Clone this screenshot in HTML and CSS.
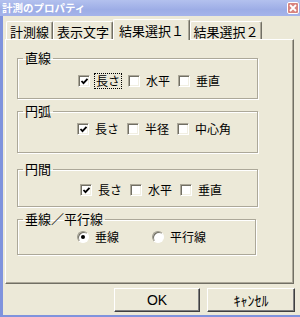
FILE: index.html
```html
<!DOCTYPE html>
<html lang="ja">
<head>
<meta charset="utf-8">
<title>計測のプロパティ</title>
<link rel="stylesheet" href="styles.css">
</head>
<body>
<div class="window">
  <div class="titlebar">
    <span class="title">計測のプロパティ</span>
    <span class="close"><svg width="10" height="10" viewBox="0 0 10 10"><path d="M2 2 L8 8 M8 2 L2 8" stroke="#fff" stroke-width="1.8" fill="none"/></svg></span>
  </div>
  <div class="client">
    <div class="tabs">
      <div class="tab t1">計測線</div>
      <div class="tab t2">表示文字</div>
      <div class="tab t3 active">結果選択１</div>
      <div class="tab t4">結果選択２</div>
    </div>
    <div class="panel">
      <fieldset class="group g1">
        <legend>直線</legend>
        <div class="row">
          <span class="item"><span class="cb checked"><svg width="9" height="9" viewBox="0 0 9 9"><path d="M1.5 4 L3.5 6.2 L7.5 1.8" stroke="#000" stroke-width="1.8" fill="none"/></svg></span><span class="lbl focus">長さ</span></span>
          <span class="item"><span class="cb"></span><span class="lbl">水平</span></span>
          <span class="item"><span class="cb"></span><span class="lbl">垂直</span></span>
        </div>
      </fieldset>
      <fieldset class="group g2">
        <legend>円弧</legend>
        <div class="row">
          <span class="item"><span class="cb checked"><svg width="9" height="9" viewBox="0 0 9 9"><path d="M1.5 4 L3.5 6.2 L7.5 1.8" stroke="#000" stroke-width="1.8" fill="none"/></svg></span><span class="lbl">長さ</span></span>
          <span class="item"><span class="cb"></span><span class="lbl">半径</span></span>
          <span class="item"><span class="cb"></span><span class="lbl">中心角</span></span>
        </div>
      </fieldset>
      <fieldset class="group g3">
        <legend>円間</legend>
        <div class="row">
          <span class="item"><span class="cb checked"><svg width="9" height="9" viewBox="0 0 9 9"><path d="M1.5 4 L3.5 6.2 L7.5 1.8" stroke="#000" stroke-width="1.8" fill="none"/></svg></span><span class="lbl">長さ</span></span>
          <span class="item"><span class="cb"></span><span class="lbl">水平</span></span>
          <span class="item"><span class="cb"></span><span class="lbl">垂直</span></span>
        </div>
      </fieldset>
      <fieldset class="group g4">
        <legend>垂線／平行線</legend>
        <div class="row">
          <span class="item wide"><span class="radio checked"><span class="dot"></span></span><span class="lbl">垂線</span></span>
          <span class="item wide"><span class="radio"></span><span class="lbl">平行線</span></span>
        </div>
      </fieldset>
    </div>
    <div class="buttons">
      <button class="btn ok">OK</button>
      <button class="btn cancel">ｷｬﾝｾﾙ</button>
    </div>
  </div>
</div>
</body>
</html>
```
FILE: styles.css
```css
* { box-sizing: border-box; }
html, body { margin: 0; padding: 0; }
body {
  background: #ece9d8;
  font-family: "Noto Sans CJK JP", "Liberation Sans", sans-serif;
  color: #000;
}
.window {
  width: 300px;
  height: 317px;
  background: #ece9d8;
  display: flex;
  flex-direction: column;
  overflow: hidden;
}
.titlebar {
  height: 16px;
  flex: none;
  display: flex;
  align-items: center;
  background: linear-gradient(to bottom, #b3c1ee 0%, #9dade6 60%, #a5b4ea 100%);
}
.title {
  color: #fff;
  font-size: 10.5px;
  font-weight: bold;
  line-height: 16px;
  padding-left: 2px;
  white-space: nowrap;
}
.close {
  margin-left: auto;
  margin-right: 1px;
  width: 12px;
  height: 12px;
  border: 1px solid #fff;
  border-radius: 2px;
  background: #d8847f;
  display: flex;
  align-items: center;
  justify-content: center;
}
.client {
  flex: 1;
  border-left: 3px solid #7f93dd;
  border-bottom: 2px solid #7f93dd;
  display: flex;
  flex-direction: column;
}
.tabs {
  height: 23px;
  flex: none;
  display: flex;
  align-items: flex-end;
  padding-left: 3px;
}
.tab {
  height: 18px;
  font-size: 13px;
  line-height: 13px;
  padding-top: 3px;
  text-align: center;
  white-space: nowrap;
  border-top: 1px solid #fff;
  border-left: 1px solid #fff;
  border-right: 1px solid #716f64;
  border-radius: 2px 2px 0 0;
  box-shadow: inset -1px 0 0 #aca899;
}
.t1 { width: 47px; }
.t2 { width: 60px; }
.t3 { width: 77px; }
.t4 { width: 72px; }
.tab.active {
  height: 21px;
  padding-top: 4px;
  margin-bottom: -1px;
  position: relative;
  z-index: 1;
  background: #ece9d8;
}
.panel {
  margin-left: 2px;
  width: 289px;
  height: 245px;
  flex: none;
  border-top: 1px solid #fff;
  border-left: 1px solid #fff;
  border-right: 1px solid #716f64;
  border-bottom: 1px solid #716f64;
  box-shadow: inset -1px -1px 0 #aca899;
  padding: 11px 0 0 11px;
  display: flex;
  flex-direction: column;
}
.group {
  margin: 0;
  padding: 0;
  width: 241px;
  min-width: 0;
  border: 1px solid #aca899;
  box-shadow: 1px 1px 0 #fff, inset 1px 1px 0 #fff;
}
.group legend {
  margin-left: 5px;
  padding: 0 2px;
  font-size: 13px;
  line-height: 14px;
  white-space: nowrap;
}
.row {
  height: 16px;
  display: flex;
  align-items: center;
  box-sizing: content-box;
  font-size: 12px;
  line-height: 14px;
}
.g1 .row { padding: 8px 0 9px 60px; }
.g2 { margin-top: 5px; }
.g2 .row { padding: 3px 0 15px 59px; }
.g3 { margin-top: 9px; }
.g3 .row { padding: 6px 0 8px 62px; }
.g4 { margin-top: 5px; width: 239px; }
.g4 .row { padding: 3px 0 9px 59px; }
.item {
  width: 50px;
  flex: none;
  display: flex;
  align-items: center;
  white-space: nowrap;
}
.item.wide { width: 75px; }
.cb {
  width: 12px;
  height: 12px;
  flex: none;
  background: #fff;
  border: 1px solid;
  border-color: #aca899 #fff #fff #aca899;
  box-shadow: inset 1px 1px 0 #716f64, inset -1px -1px 0 #f1efe2;
  display: flex;
  align-items: center;
  justify-content: center;
  margin-right: 5px;
}
.radio {
  width: 12px;
  height: 12px;
  flex: none;
  border-radius: 50%;
  background: #fff;
  border: 1px solid;
  border-color: #9d9a8c #fff #fff #9d9a8c;
  box-shadow: inset 1px 1px 0 #716f64;
  display: flex;
  align-items: center;
  justify-content: center;
  margin-right: 5px;
}
.dot {
  width: 4px;
  height: 4px;
  border-radius: 50%;
  background: #000;
}
.lbl {
  border: 1px solid transparent;
  padding: 0 1px;
  margin-left: -1px;
}
.lbl.focus { border: 1px dotted #000; }
.buttons {
  margin-top: 4px;
  display: flex;
  justify-content: flex-end;
  gap: 7px;
  padding-right: 5px;
}
.btn {
  height: 24px;
  margin: 0;
  padding: 0;
  background: #ece9d8;
  border: 1px solid;
  border-color: #fff #404040 #404040 #fff;
  box-shadow: inset -1px -1px 0 #808080;
  color: #000;
  font-size: 14px;
  line-height: 20px;
}
.ok { width: 86px; font-family: "Liberation Sans", sans-serif; }
.cancel { width: 88px; font-family: "Noto Sans CJK JP", sans-serif; }
```
